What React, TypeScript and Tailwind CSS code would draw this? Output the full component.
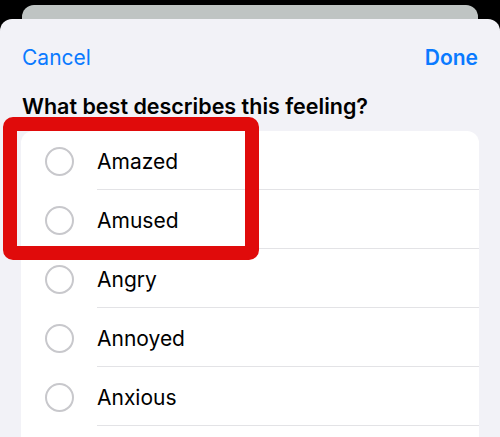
import React from 'react';

const feelings = ['Amazed', 'Amused', 'Angry', 'Annoyed', 'Anxious'];

export default function App() {
  return (
    <div
      className="relative w-[500px] h-[437px] bg-black overflow-hidden flex flex-col"
      style={{ fontFamily: 'Inter, "Noto Sans", sans-serif' }}
    >
      {/* card stacked behind the sheet */}
      <div className="mx-[22px] mt-[5px] h-[14px] rounded-t-[12px] bg-[#bfc4c3] shrink-0" />

      {/* sheet */}
      <div className="flex-1 bg-[#f2f2f7] rounded-t-[12px] flex flex-col">
        <div className="flex items-center justify-between px-[22px] h-[76px] pt-[1px]">
          <button className="text-[21px] text-[#0a7aff] leading-none">Cancel</button>
          <button className="text-[21px] text-[#0a7aff] font-semibold leading-none">Done</button>
        </div>

        <h2 className="px-[22px] text-[21.5px] font-semibold text-black leading-none h-[36px] pt-[1px]">
          What best describes this feeling?
        </h2>

        <div className="mx-[21px] bg-white rounded-t-[12px] flex-1">
          {feelings.map((f) => (
            <div key={f} className="flex items-center h-[59px]">
              <div className="w-[76px] flex justify-center shrink-0 pl-[1px] pt-[2px]">
                <span className="w-[29px] h-[29px] rounded-full border-2 border-[#c8c8cc]" />
              </div>
              <div className="flex-1 h-full flex items-center border-b border-[#e3e3e6] pt-[3px]">
                <span className="text-[21px] text-black">{f}</span>
              </div>
            </div>
          ))}
        </div>
      </div>

      {/* highlight annotation */}
      <div className="absolute left-[3px] top-[117px] w-[256px] h-[143px] border-[14px] border-[#e00b0b] rounded-[10px]" />
    </div>
  );
}
